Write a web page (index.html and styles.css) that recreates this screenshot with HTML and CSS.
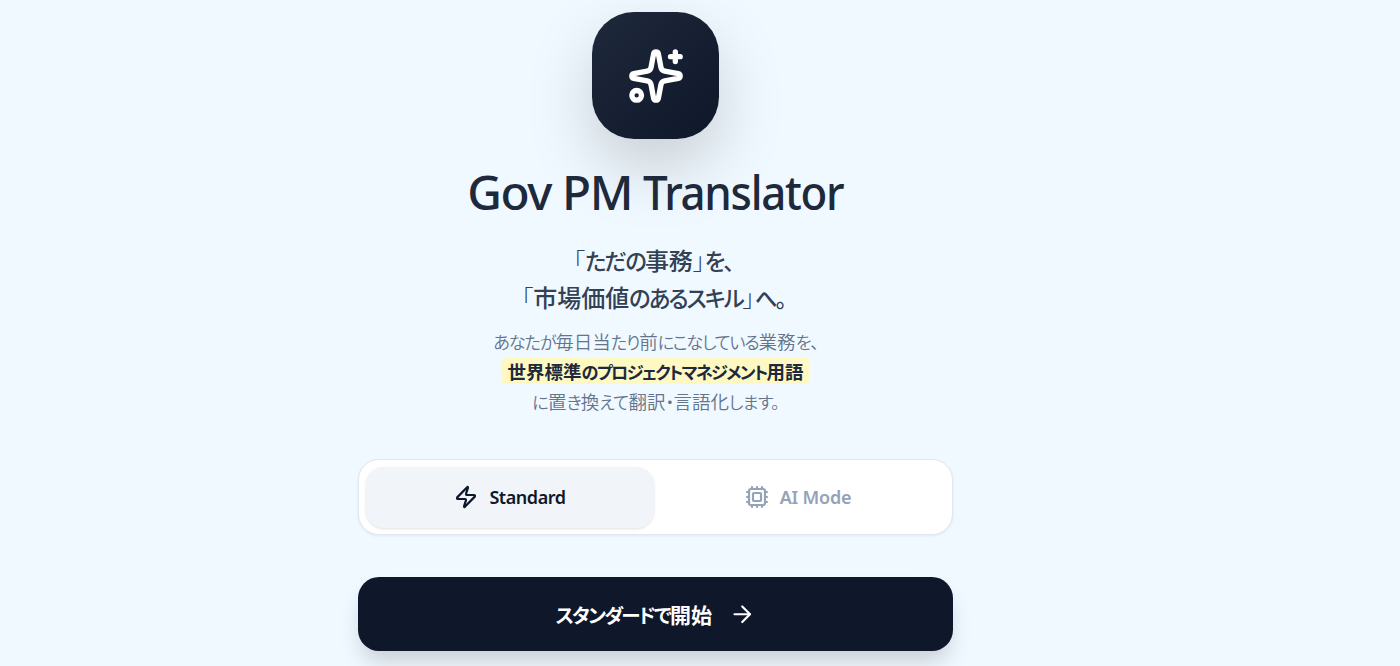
FILE: index.html
```html
<!DOCTYPE html>
<html lang="ja">
<head>
    <meta charset="UTF-8">
    <title>Gov PM Translator</title>
    <link rel="stylesheet" href="styles.css">
</head>
<body>
    <main class="hero">
        <div class="logo">
            <svg class="logo-icon" viewBox="0 0 24 24">
                <path d="M11.017 2.814a1 1 0 0 1 1.966 0l1.051 5.558a2 2 0 0 0 1.594 1.594l5.558 1.051a1 1 0 0 1 0 1.966l-5.558 1.051a2 2 0 0 0-1.594 1.594l-1.051 5.558a1 1 0 0 1-1.966 0l-1.051-5.558a2 2 0 0 0-1.594-1.594l-5.558-1.051a1 1 0 0 1 0-1.966l5.558-1.051a2 2 0 0 0 1.594-1.594z"/>
                <path d="M20 2v4"/>
                <path d="M22 4h-4"/>
                <circle cx="4" cy="20" r="2"/>
            </svg>
        </div>

        <h1 class="title">Gov PM <span class="narrow">Translator</span></h1>

        <p class="tagline">
            <span class="line"><span class="bracket">「</span><span class="kana">ただの</span>事務<span class="bracket">」</span><span class="kana">を、</span></span>
            <span class="line"><span class="bracket">「</span>市場価値<span class="kana">のあるスキル</span><span class="bracket">」</span><span class="kana">へ。</span></span>
        </p>

        <p class="lead">
            <span class="line"><span class="kana">あなたが</span>毎日当<span class="kana">たり</span>前<span class="kana">にこなしている</span>業務<span class="kana">を、</span></span>
            <mark class="highlight">世界標準<span class="kana">のプロジェクトマネジメント</span>用語</mark>
            <span class="line lead-last"><span class="kana">に</span>置<span class="kana">き</span>換<span class="kana">えて</span>翻訳<span class="kana">・</span>言語化<span class="kana">します。</span></span>
        </p>

        <div class="mode-switch">
            <button class="mode active">
                <svg class="icon" viewBox="0 0 24 24">
                    <path d="M4 14a1 1 0 0 1-.78-1.63l9.9-10.2a.5.5 0 0 1 .86.46l-1.92 6.02A1 1 0 0 0 13 10h7a1 1 0 0 1 .78 1.63l-9.9 10.2a.5.5 0 0 1-.86-.46l1.92-6.02A1 1 0 0 0 11 14z"/>
                </svg>
                <span>Standard</span>
            </button>
            <button class="mode">
                <svg class="icon" viewBox="0 0 24 24">
                    <path d="M12 20v2M12 2v2M17 20v2M17 2v2M2 12h2M2 17h2M2 7h2M20 12h2M20 17h2M20 7h2M7 20v2M7 2v2"/>
                    <rect x="4" y="4" width="16" height="16" rx="2"/>
                    <rect x="8" y="8" width="8" height="8" rx="1"/>
                </svg>
                <span>AI Mode</span>
            </button>
        </div>

        <button class="start">
            <span class="start-label"><span class="kana">スタンダードで</span>開始</span>
            <svg class="arrow" viewBox="0 0 24 24">
                <path d="M5 12h14"/>
                <path d="m12 5 7 7-7 7"/>
            </svg>
        </button>
    </main>
</body>
</html>
```
FILE: styles.css
```css
* { box-sizing: border-box; }
body {
    margin: 0;
    height: 666px;
    overflow: hidden;
    background: #f0f9ff;
    color: #1e293b;
    font-family: "Noto Sans", "Noto Sans CJK JP", sans-serif;
}
button { border: none; font-family: inherit; cursor: pointer; }
svg { fill: none; stroke: currentColor; stroke-width: 2; stroke-linecap: round; stroke-linejoin: round; }

.hero {
    width: 595px;
    margin-left: 358px;
    padding-top: 12px;
    display: flex;
    flex-direction: column;
    align-items: center;
    text-align: center;
}

.logo {
    width: 127px;
    height: 127px;
    border-radius: 42px;
    background: linear-gradient(135deg, #1e293b, #0f172a);
    color: #fff;
    display: flex;
    align-items: center;
    justify-content: center;
    box-shadow: 0 27px 66px rgba(0, 0, 0, 0.17);
}
.logo-icon { width: 58px; height: 58px; stroke-width: 2.2; }

.title {
    height: 58px;
    margin: 24px 0 0;
    font-size: 47.7px;
    line-height: 58px;
    font-weight: 540;
    letter-spacing: -1.4px;
    white-space: nowrap;
}
.narrow {
    display: inline-block;
    margin-right: -17px;
    transform: scaleX(0.92);
    transform-origin: left;
}

.line { display: block; height: 30px; white-space: nowrap; }
.kana { font-feature-settings: "palt"; font-size: 0.93em; letter-spacing: -0.07em; }
.bracket { font-weight: 300; }
.tagline, .lead { margin: 0; font-family: "Noto Sans CJK JP", sans-serif; }
.tagline {
    margin-top: 20px;
    padding-right: 5px;
    font-size: 24px;
    line-height: 37px;
    font-weight: 500;
    color: #334155;
    font-feature-settings: "palt";
}
.tagline .line { height: 37px; }
.tagline .kana { letter-spacing: -0.085em; }
.lead {
    margin-top: 11px;
    font-size: 18.5px;
    line-height: 30px;
    font-weight: 350;
    color: #64748b;
}
.highlight {
    display: block;
    width: 307px;
    height: 26px;
    margin: 2px auto;
    line-height: 26px;
    border-radius: 3px;
    background: #fef9c3;
    color: #1e293b;
    font-weight: 700;
    white-space: nowrap;
}
.highlight .kana { letter-spacing: -0.1em; }
.lead-last .kana { letter-spacing: -0.04em; }

.mode-switch {
    width: 595px;
    height: 76px;
    margin-top: 43px;
    padding: 6.5px 7px;
    display: flex;
    background: #fff;
    border: 1px solid #e2e8f0;
    border-radius: 21px;
    box-shadow: 0 1px 3px rgba(15, 23, 42, 0.08);
}
.mode {
    flex: 1;
    height: 61px;
    padding: 0 3px 0 0;
    display: flex;
    align-items: center;
    justify-content: center;
    gap: 11px;
    border-radius: 18px;
    background: none;
    color: #94a3b8;
    font-size: 18px;
    font-weight: 600;
    letter-spacing: -0.2px;
}
.mode.active {
    padding: 0;
    background: #f1f5f9;
    color: #0f172a;
    letter-spacing: -0.45px;
    box-shadow: 0 1px 3px rgba(0, 0, 0, 0.12);
}
.icon { width: 24px; height: 24px; stroke-width: 2.2; }

.start {
    width: 595px;
    height: 74px;
    margin-top: 42px;
    display: flex;
    align-items: center;
    justify-content: center;
    gap: 17px;
    border-radius: 21px;
    background: #0f172a;
    color: #fff;
    font-family: "Noto Sans CJK JP", sans-serif;
    font-size: 21px;
    font-weight: 700;
    box-shadow: 0 14px 22px -4px rgba(0, 0, 0, 0.17);
}
.start .kana { letter-spacing: -0.09em; }
.arrow { width: 26.5px; height: 26.5px; }
```
